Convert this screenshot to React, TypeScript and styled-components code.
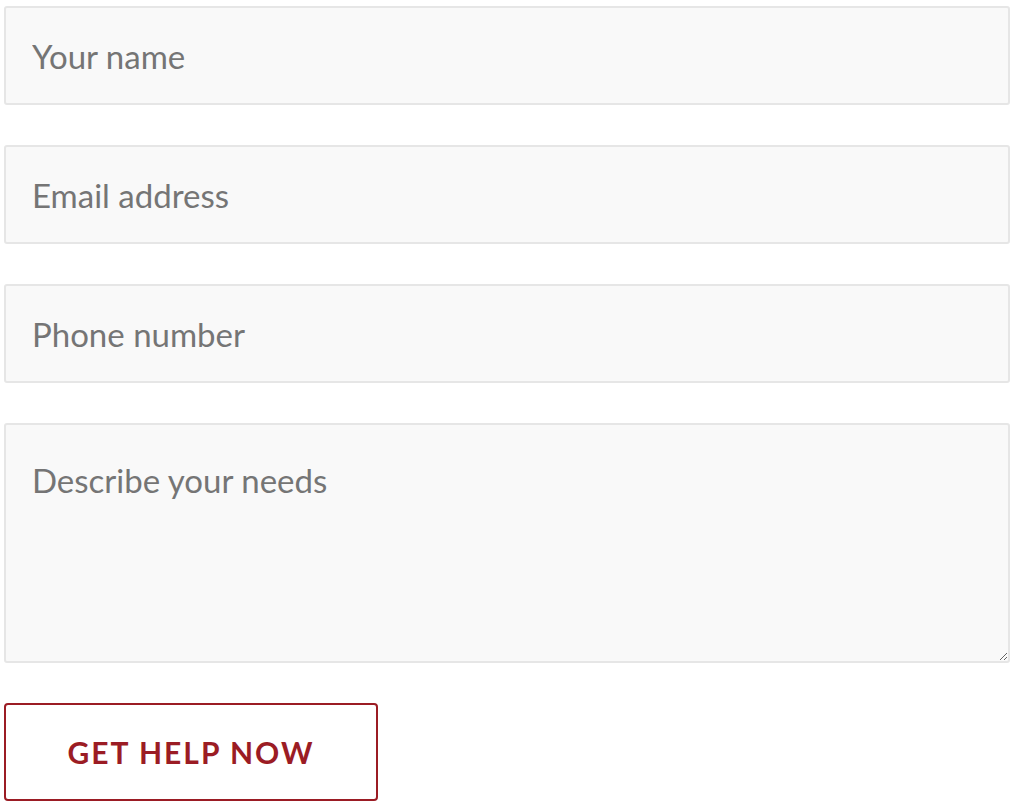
import styled, { createGlobalStyle } from "styled-components";

const GlobalStyle = createGlobalStyle`
  * {
    box-sizing: border-box;
  }

  body {
    margin: 0;
    background: #ffffff;
    font-family: "Lato", "Liberation Sans", sans-serif;
  }
`;

const Form = styled.form`
  display: flex;
  flex-direction: column;
  align-items: flex-start;
  gap: 40px;
  padding: 6px 6px 0 4px;
`;

const fieldStyles = `
  width: 100%;
  border: 2px solid #e6e6e6;
  border-radius: 3px;
  background: #f9f9f9;
  padding: 0 26px;
  font-family: "Lato", "Liberation Sans", sans-serif;
  font-size: 33px;
  color: #333333;
  outline: none;

  &::placeholder {
    color: #757575;
    opacity: 1;
  }
`;

const Input = styled.input`
  ${fieldStyles}
  height: 99px;
`;

const TextArea = styled.textarea`
  ${fieldStyles}
  height: 240px;
  padding-top: 36px;
  line-height: 1.2;
  resize: vertical;
`;

const SubmitButton = styled.button`
  width: 374px;
  height: 98px;
  border: 2px solid #9b1c24;
  border-radius: 4px;
  background: #ffffff;
  color: #9b1c24;
  font-family: "Lato", "Liberation Sans", sans-serif;
  font-size: 30px;
  font-weight: 700;
  letter-spacing: 2px;
  text-transform: uppercase;
  cursor: pointer;
`;

export default function App() {
  return (
    <>
      <GlobalStyle />
      <Form onSubmit={(e) => e.preventDefault()}>
        <Input type="text" placeholder="Your name" />
        <Input type="email" placeholder="Email address" />
        <Input type="tel" placeholder="Phone number" />
        <TextArea placeholder="Describe your needs" />
        <SubmitButton type="submit">Get help now</SubmitButton>
      </Form>
    </>
  );
}
